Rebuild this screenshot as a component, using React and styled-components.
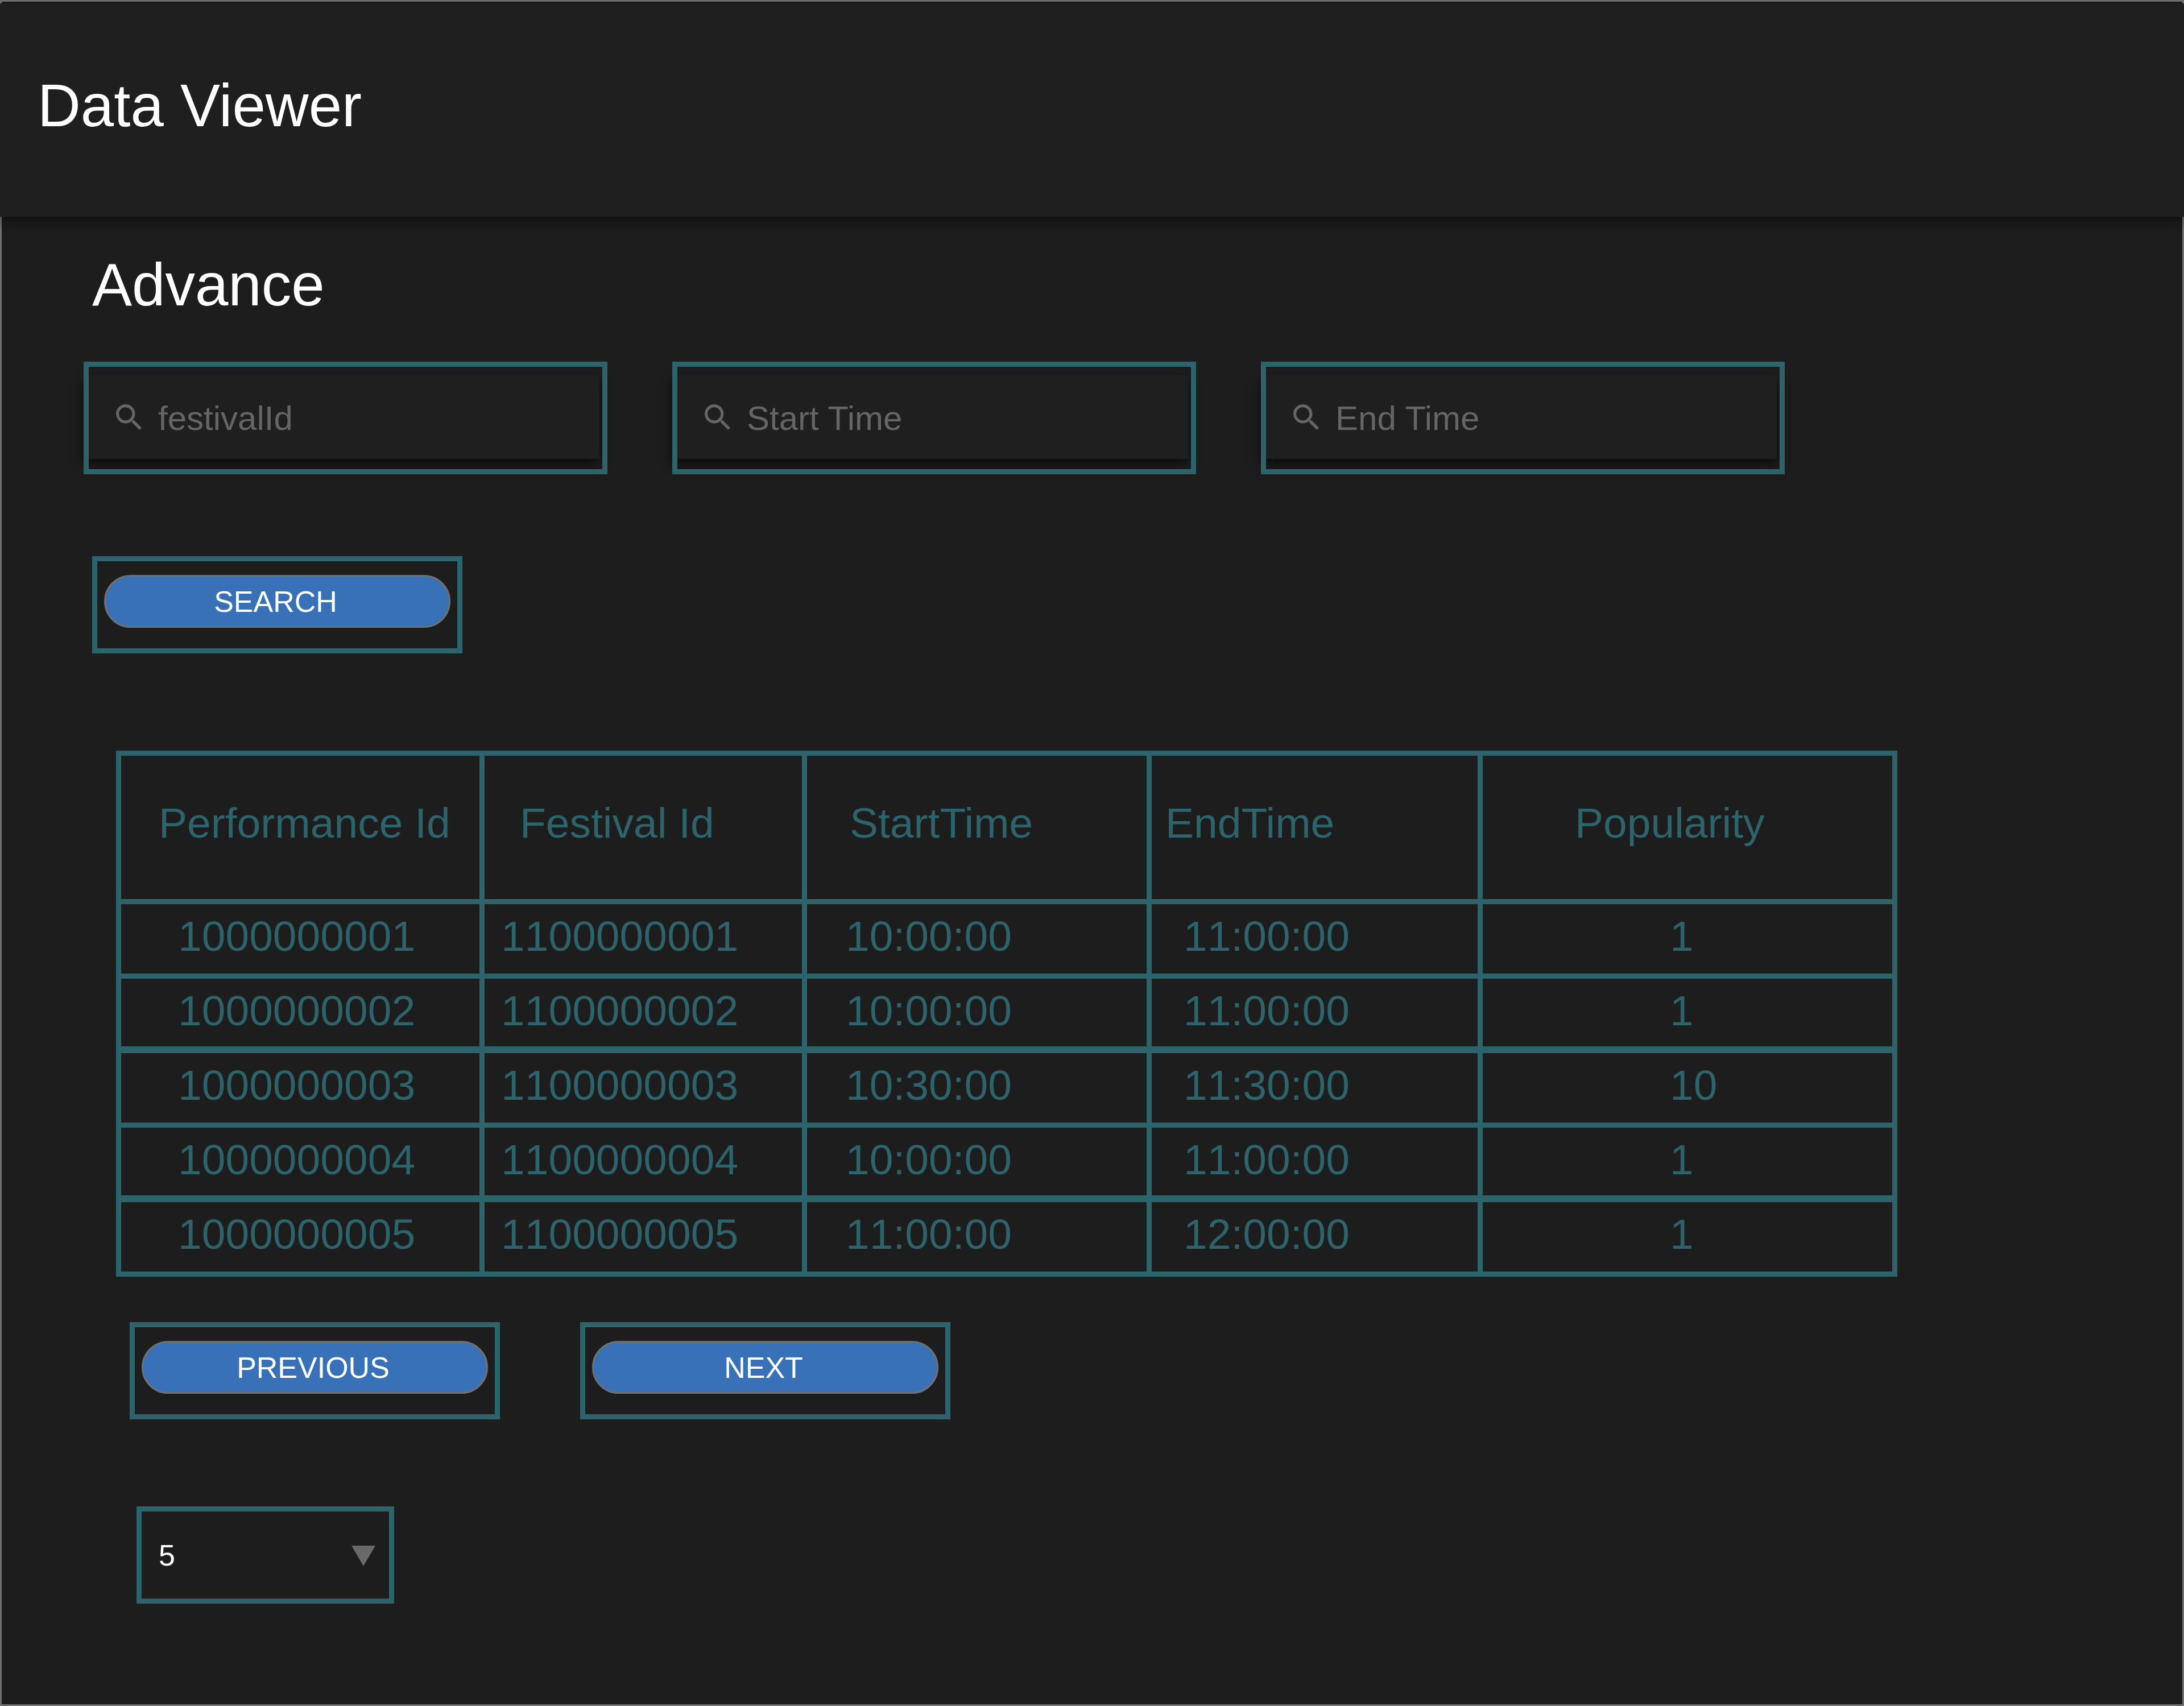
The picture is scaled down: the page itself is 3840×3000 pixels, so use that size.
import React, { useState } from "react";
import styled, { createGlobalStyle } from "styled-components";

const teal = "#2d636b";
const surface = "#1f1f1f";
const backdrop = "#1d1d1d";
const grey = "#707070";
const muted = "#656565";

const GlobalStyle = createGlobalStyle`
  *, *::before, *::after { box-sizing: border-box; }
  body {
    margin: 0;
    background: ${backdrop};
    color: #fff;
    font-family: "Liberation Sans", Arial, Helvetica, sans-serif;
  }
`;

const Page = styled.div`
  min-height: 100vh;
  padding-top: 3px;
  border: 3px solid ${grey};
  background: ${backdrop};
`;

const Header = styled.header`
  min-height: 375px;
  margin: 0 -3px;
  padding: 117px 66px;
  background: ${surface};
  box-shadow: 0 9px 18px rgba(0, 0, 0, 0.45);
`;

const Title = styled.h1`
  margin: 0;
  font-size: 105px;
  line-height: 126px;
  font-weight: 400;
`;

const Main = styled.main`
  padding: 57px 144px 177px;
`;

const Subtitle = styled.h2`
  margin: 0 0 72px;
  padding-left: 15px;
  font-size: 105px;
  line-height: 126px;
  font-weight: 400;
`;

const Filters = styled.div`
  display: flex;
  flex-wrap: wrap;
  gap: 114px;
`;

const Field = styled.label`
  display: flex;
  width: 921px;
  height: 198px;
  padding: 24px 21px 27px 0;
  outline: 9px solid ${teal};
  outline-offset: -9px;
`;

const FieldSurface = styled.span`
  display: flex;
  flex: 1;
  align-items: center;
  gap: 29px;
  padding-left: 57px;
  background: ${surface};
  box-shadow: 0 9px 18px rgba(0, 0, 0, 0.6);
`;

const FieldIcon = styled.svg`
  flex: none;
  width: 45px;
  height: 45px;
  fill: ${muted};
`;

const FieldInput = styled.input`
  flex: 1;
  min-width: 0;
  padding: 4px 0 0;
  border: 0;
  outline: 0;
  background: transparent;
  color: #fff;
  font: inherit;
  font-size: 60px;
  line-height: 72px;

  &::placeholder {
    color: ${muted};
    opacity: 1;
  }
`;

const Actions = styled.div`
  display: flex;
  flex-wrap: wrap;
  gap: 141px;
  margin-top: ${(p) => p.$top}px;
  padding-left: ${(p) => p.$indent}px;
`;

const ActionFrame = styled.div`
  width: 651px;
  height: 171px;
  padding: 24px 12px;
  border: 9px solid ${teal};
`;

const ActionButton = styled.button`
  display: block;
  width: 100%;
  height: 93px;
  padding: 0 6px 0 0;
  border: 3px solid ${grey};
  border-radius: 47px;
  background: #3871b8;
  color: #fff;
  font: inherit;
  font-size: 52px;
  line-height: 60px;
  cursor: pointer;
`;

const DataTable = styled.table`
  width: calc(100% - 57px);
  max-width: 3132px;
  margin: 171px 0 0 57px;
  border: 0 solid ${teal};
  border-width: 9px 0 0 9px;
  border-collapse: separate;
  border-spacing: 0;
  table-layout: fixed;
  color: ${teal};
  font-size: 75px;
  line-height: 90px;
`;

const Col = styled.col`
  width: ${(p) => p.$width}px;
`;

const HeadCell = styled.th`
  height: 261px;
  padding: 73px 0 0 ${(p) => p.$inset}px;
  border: 0 solid ${teal};
  border-width: 0 9px 9px 0;
  font-weight: 400;
  text-align: left;
  vertical-align: top;
  white-space: nowrap;
`;

const Cell = styled.td`
  height: 131px;
  padding: 11px 0 0 ${(p) => p.$inset}px;
  border: 0 solid ${teal};
  border-width: 0 9px 9px 0;
  font-kerning: none;
  vertical-align: top;
  white-space: nowrap;

  tr:nth-child(even) > & {
    border-bottom-width: 12px;
  }
`;

const SizePicker = styled.div`
  position: relative;
  width: 453px;
  margin: 153px 0 0 93px;
`;

const SizeSelect = styled.select`
  display: block;
  width: 100%;
  height: 171px;
  padding: 0 90px 0 30px;
  border: 9px solid ${teal};
  border-radius: 0;
  appearance: none;
  background: ${backdrop};
  color: #fff;
  font: inherit;
  font-size: 52px;
  line-height: 60px;
`;

const SizeArrow = styled.svg`
  position: absolute;
  top: 69px;
  right: 33px;
  width: 42px;
  height: 36px;
  fill: #696969;
  pointer-events: none;
`;

const fields = ["festivalId", "Start Time", "End Time"];

const columns = [
  { key: "performance", label: "Performance Id", width: 639, head: 66, body: 100 },
  { key: "festival", label: "Festival Id", width: 567, head: 62, body: 29 },
  { key: "start", label: "StartTime", width: 606, head: 75, body: 68 },
  { key: "end", label: "EndTime", width: 582, head: 24, body: 56 },
  { key: "popularity", label: "Popularity", width: 729, head: 162, body: 329 },
];

const rows = [
  { performance: "1000000001", festival: "1100000001", start: "10:00:00", end: "11:00:00", popularity: 1 },
  { performance: "1000000002", festival: "1100000002", start: "10:00:00", end: "11:00:00", popularity: 1 },
  { performance: "1000000003", festival: "1100000003", start: "10:30:00", end: "11:30:00", popularity: 10 },
  { performance: "1000000004", festival: "1100000004", start: "10:00:00", end: "11:00:00", popularity: 1 },
  { performance: "1000000005", festival: "1100000005", start: "11:00:00", end: "12:00:00", popularity: 1 },
];

function SearchField({ label }) {
  return (
    <Field>
      <FieldSurface>
        <FieldIcon viewBox="3 3 17.49 17.49" aria-hidden="true">
          <path d="M15.5 14h-.79l-.28-.27A6.471 6.471 0 0 0 16 9.5 6.5 6.5 0 1 0 9.5 16c1.61 0 3.09-.59 4.23-1.57l.27.28v.79l5 4.99L20.49 19l-4.99-5zm-6 0C7.01 14 5 11.99 5 9.5S7.01 5 9.5 5 14 7.01 14 9.5 11.99 14 9.5 14z" />
        </FieldIcon>
        <FieldInput type="text" placeholder={label} aria-label={label} />
      </FieldSurface>
    </Field>
  );
}

function Action({ children }) {
  return (
    <ActionFrame>
      <ActionButton type="button">{children}</ActionButton>
    </ActionFrame>
  );
}

export default function App() {
  const [size, setSize] = useState("5");
  return (
    <>
      <GlobalStyle />
      <Page>
        <Header>
          <Title>Data Viewer</Title>
        </Header>
        <Main>
          <Subtitle>Advance</Subtitle>
          <Filters>
            {fields.map((label) => (
              <SearchField key={label} label={label} />
            ))}
          </Filters>
          <Actions $top={144} $indent={15}>
            <Action>SEARCH</Action>
          </Actions>
          <DataTable>
            <colgroup>
              {columns.map((c) => (
                <Col key={c.key} $width={c.width} />
              ))}
            </colgroup>
            <thead>
              <tr>
                {columns.map((c) => (
                  <HeadCell key={c.key} scope="col" $inset={c.head}>
                    {c.label}
                  </HeadCell>
                ))}
              </tr>
            </thead>
            <tbody>
              {rows.map((row) => (
                <tr key={row.performance}>
                  {columns.map((c) => (
                    <Cell key={c.key} $inset={c.body}>
                      {row[c.key]}
                    </Cell>
                  ))}
                </tr>
              ))}
            </tbody>
          </DataTable>
          <Actions $top={80} $indent={81}>
            <Action>PREVIOUS</Action>
            <Action>NEXT</Action>
          </Actions>
          <SizePicker>
            <SizeSelect
              aria-label="Rows per page"
              value={size}
              onChange={(e) => setSize(e.target.value)}
            >
              <option>5</option>
              <option>10</option>
              <option>20</option>
            </SizeSelect>
            <SizeArrow viewBox="0 0 42 36" aria-hidden="true">
              <path d="M0 0h42L21 36z" />
            </SizeArrow>
          </SizePicker>
        </Main>
      </Page>
    </>
  );
}
